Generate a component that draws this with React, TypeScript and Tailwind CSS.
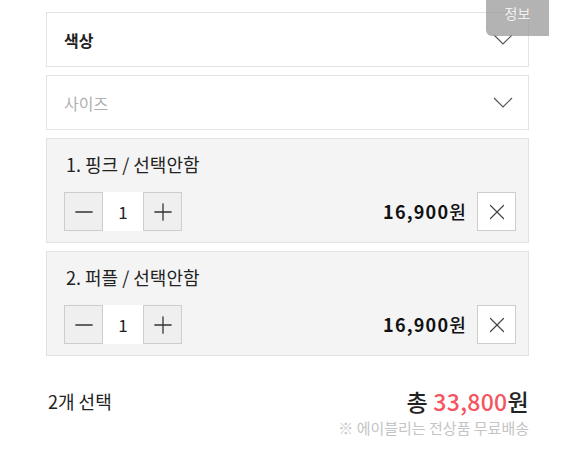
import { X, Minus, Plus } from 'lucide-react'

const font = { fontFamily: '"Noto Sans CJK KR", "Noto Sans", sans-serif' }

type Item = { id: number; label: string; qty: number; price: string }

const items: Item[] = [
  { id: 1, label: '1. 핑크 / 선택안함', qty: 1, price: '16,900' },
  { id: 2, label: '2. 퍼플 / 선택안함', qty: 1, price: '16,900' },
]

function Chevron() {
  return (
    <svg width="20" height="11" viewBox="0 0 20 11" fill="none" className="text-[#555]">
      <polyline points="1,1 10,10 19,1" stroke="currentColor" strokeWidth="1.2" />
    </svg>
  )
}

function SelectBox({ label, placeholder }: { label: string; placeholder?: boolean }) {
  return (
    <div className="h-[55px] border border-[#e3e3e3] bg-white flex items-center justify-between pl-[17px] pr-[15px]">
      <span className={`text-[16px] ${placeholder ? 'text-[#b0b0b0]' : 'text-[#222] font-bold'}`}>{label}</span>
      <Chevron />
    </div>
  )
}

function OptionItem({ item }: { item: Item }) {
  return (
    <div className="h-[105px] bg-[#f4f4f4] border border-[#e2e2e2] pt-[13px] pl-[17px] pr-[12px]">
      <p className="pl-[2px] text-[18px] text-[#222] leading-[24px]">{item.label}</p>
      <div className="mt-[16px] flex items-center justify-between">
        <div className="flex items-center">
          <button className="w-[39px] h-[39px] bg-[#efefef] border border-[#cdcdcd] flex items-center justify-center text-[#333]">
            <Minus size={28} strokeWidth={1.1} />
          </button>
          <div className="w-[40px] h-[39px] bg-white flex items-center justify-center text-[17px] text-[#222]">{item.qty}</div>
          <button className="w-[39px] h-[39px] bg-[#efefef] border border-[#cdcdcd] flex items-center justify-center text-[#333]">
            <Plus size={28} strokeWidth={1.1} />
          </button>
        </div>
        <div className="flex items-center gap-[10px]">
          <span className="text-[18px] font-bold text-[#111] tracking-[1.2px]">
            {item.price}
            <span className="font-medium">원</span>
          </span>
          <button className="w-[39px] h-[39px] bg-white border border-[#cdcdcd] flex items-center justify-center text-[#444]">
            <X size={26} strokeWidth={1.1} />
          </button>
        </div>
      </div>
    </div>
  )
}

export default function App() {
  return (
    <div className="relative w-[563px] h-[451px] bg-white overflow-hidden" style={font}>
      <div className="ml-[46px] w-[483px] pt-[12px] flex flex-col">
        <SelectBox label="색상" />
        <div className="mt-[8px]">
          <SelectBox label="사이즈" placeholder />
        </div>
        <div className="mt-[8px] flex flex-col gap-[8px]">
          {items.map((item) => (
            <OptionItem key={item.id} item={item} />
          ))}
        </div>
        <div className="mt-[28px] flex items-center justify-between">
          <span className="pl-[2px] text-[18px] text-[#222]">2개 선택</span>
          <span className="text-[23px] text-[#222] font-medium tracking-[0.3px]">
            총 <span className="text-[#f4555f]">33,800</span>원
          </span>
        </div>
        <p className="mt-[1px] text-right text-[15px] leading-[16px] text-[#c4c4c4]">※ 에이블리는 전상품 무료배송</p>
      </div>
      <div className="absolute top-0 left-[486px] w-[63px] h-[36px] bg-[#9a9a9a]/75 rounded-bl-[6px] flex justify-center pt-[3px]">
        <span className="text-[14px] text-white/80 leading-[20px]">정보</span>
      </div>
    </div>
  )
}
